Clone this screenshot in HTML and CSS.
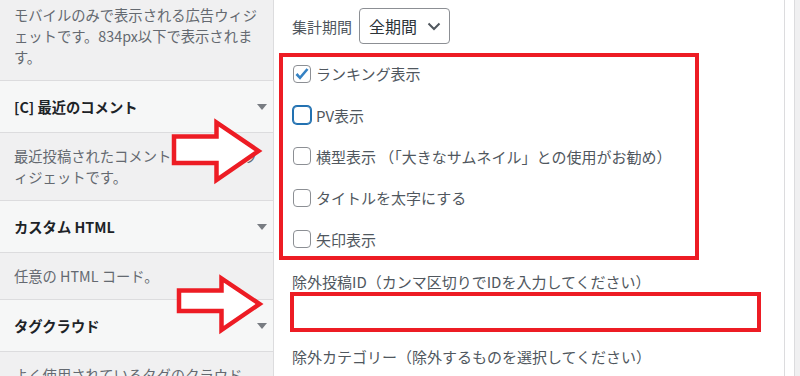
FILE: index.html
```html
<!DOCTYPE html>
<html lang="ja">
<head>
<meta charset="utf-8">
<title>Widgets</title>
<link rel="stylesheet" href="styles.css">
</head>
<body>
<div class="page">
  <aside class="sidebar">
    <div class="desc desc-first">モバイルのみで表示される広告ウィジェットです。834px以下で表示されます。</div>
    <div class="widget-head"><span class="title">[C] 最近のコメント</span><span class="toggle"></span></div>
    <div class="desc">最近投稿されたコメントを表示するウィジェットです。</div>
    <div class="widget-head"><span class="title">カスタム HTML</span><span class="toggle"></span></div>
    <div class="desc">任意の HTML コード。</div>
    <div class="widget-head"><span class="title">タグクラウド</span><span class="toggle"></span></div>
    <div class="desc">よく使用されているタグのクラウド</div>
  </aside>
  <main class="main">
    <div class="period-row">
      <span class="period-label">集計期間</span>
      <div class="select"><span>全期間</span><svg class="chev" width="14" height="14" viewBox="0 0 14 14"><path d="M1.5 4.5 L7 10 L12.5 4.5" fill="none" stroke="#50575e" stroke-width="2"/></svg></div>
    </div>
    <div class="check-group">
      <label class="check"><span class="box"><svg width="18" height="18" viewBox="0 0 18 18"><path d="M3.5 9 L7 12.8 L14.5 4" fill="none" stroke="#3582c4" stroke-width="2.6"/></svg></span><span>ランキング表示</span></label>
      <label class="check"><span class="box focus"></span><span>PV表示</span></label>
      <label class="check"><span class="box"></span><span>横型表示 （「大きなサムネイル」との使用がお勧め）</span></label>
      <label class="check"><span class="box"></span><span>タイトルを太字にする</span></label>
      <label class="check"><span class="box"></span><span>矢印表示</span></label>
    </div>
    <div class="field-label">除外投稿ID（カンマ区切りでIDを入力してください）</div>
    <div class="text-input"></div>
    <div class="field-label field-label-2">除外カテゴリー（除外するものを選択してください）</div>
  </main>
  <div class="gutter"></div>
  <div class="edge"></div>
  <svg class="arrows" width="800" height="376" viewBox="0 0 800 376">
    <path d="M174 136.5 L216.5 136.5 L216.5 122.5 L258.5 151 L216.5 180 L216.5 163 L174 163 Z" fill="#fff" stroke="#ed1c24" stroke-width="4.5" stroke-linejoin="miter"/>
    <path d="M179 290.5 L221.5 290.5 L221.5 278.5 L259.5 304 L221.5 330 L221.5 311 L179 311 Z" fill="#fff" stroke="#ed1c24" stroke-width="4.5" stroke-linejoin="miter"/>
  </svg>
</div>
</body>
</html>
```
FILE: styles.css
```css
body {
  margin: 0;
  font-family: "Noto Sans CJK JP", "Noto Sans", sans-serif;
}
.page {
  position: relative;
  display: flex;
  width: 800px;
  height: 376px;
  overflow: hidden;
  background: #fff;
}
.sidebar {
  flex: none;
  width: 273px;
  background: #f0f0f1;
  border-right: 1px solid #dcdcde;
}
.desc {
  padding: 12px 14px 13px;
  font-size: 14.3px;
  line-height: 21px;
  color: #646970;
  border-bottom: 1px solid #dcdcde;
}
.desc-first {
  padding-top: 4px;
}
.widget-head {
  display: flex;
  align-items: center;
  justify-content: space-between;
  height: 51px;
  padding: 0 6px 0 14px;
  background: #f6f7f7;
  border-bottom: 1px solid #dcdcde;
}
.title {
  font-size: 14.3px;
  font-weight: 700;
  color: #1d2327;
}
.toggle {
  width: 0;
  height: 0;
  border-left: 5px solid transparent;
  border-right: 5px solid transparent;
  border-top: 6px solid #787c82;
}
.main {
  flex: none;
  width: 505px;
  padding: 8px 0 0 5px;
  border-right: 1px solid #dcdcde;
}
.gutter {
  flex: none;
  width: 9px;
  background: #fff;
}
.edge {
  flex: none;
  width: 5px;
  background: #f0f0f1;
  border-left: 1px solid #dcdcde;
}
.period-row {
  display: flex;
  align-items: center;
  gap: 7px;
  height: 36px;
  padding-left: 13px;
}
.period-label {
  font-size: 15px;
  color: #50575e;
}
.select {
  box-sizing: border-box;
  display: flex;
  align-items: center;
  width: 91px;
  height: 36px;
  padding-left: 9px;
  border: 1px solid #8c8f94;
  border-radius: 4px;
  font-size: 16px;
  color: #2c3338;
}
.chev {
  margin-left: 10px;
}
.check-group {
  box-sizing: border-box;
  display: flex;
  flex-direction: column;
  width: 420px;
  height: 207px;
  margin-top: 9px;
  padding-left: 14px;
  outline: 4.5px solid #ed1c24;
  outline-offset: -4.5px;
}
.check {
  display: flex;
  align-items: center;
  gap: 5px;
  height: 41.4px;
  font-size: 15px;
  color: #50575e;
}
.box {
  box-sizing: border-box;
  flex: none;
  width: 18px;
  height: 18px;
  border: 1px solid #8c8f94;
  border-radius: 4px;
  background: #fff;
  position: relative;
}
.box svg {
  position: absolute;
  left: -1px;
  top: -1px;
}
.box.focus {
  border-color: #2271b1;
  box-shadow: 0 0 0 1px #2271b1;
}
.field-label {
  margin-top: 12px;
  padding-left: 13px;
  font-size: 15px;
  line-height: 20px;
  color: #50575e;
}
.field-label-2 {
  margin-top: 15px;
}
.text-input {
  box-sizing: border-box;
  width: 471px;
  height: 40px;
  margin-left: 11px;
  border: 4px solid #ed1c24;
  background: #fff;
}
.arrows {
  position: absolute;
  left: 0;
  top: 0;
  pointer-events: none;
}
```
